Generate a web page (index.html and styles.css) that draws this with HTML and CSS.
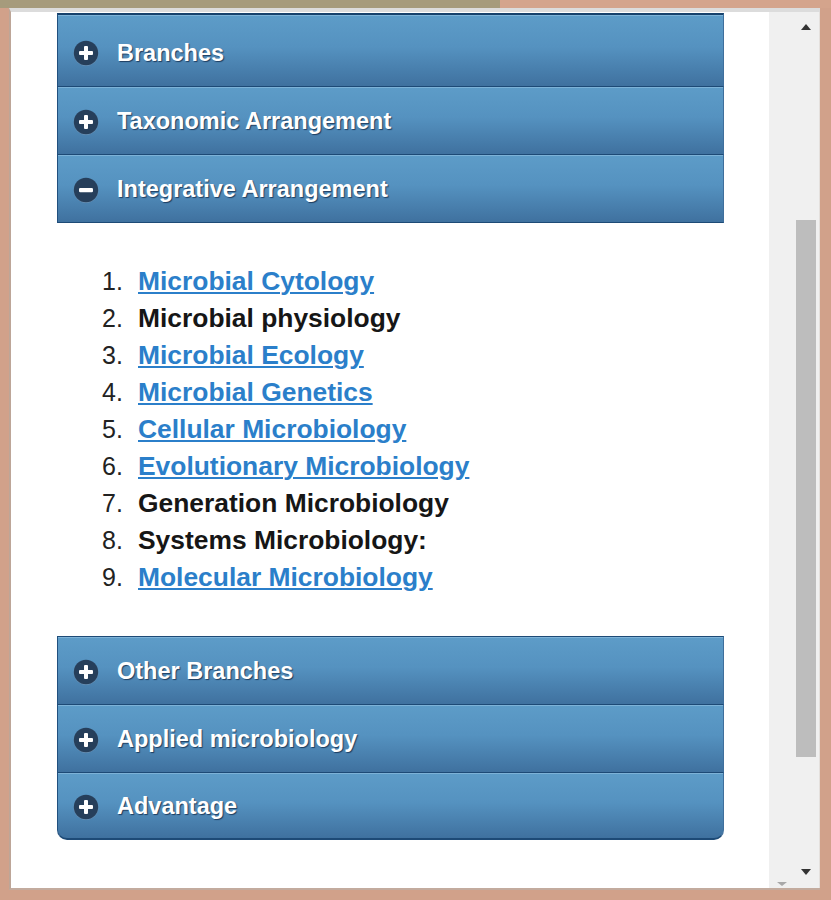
FILE: index.html
```html
<!DOCTYPE html>
<html lang="en">
<head>
<meta charset="utf-8">
<title>Microbiology</title>
<link rel="stylesheet" href="styles.css">
</head>
<body>
<div class="chrome-top"></div>
<div class="window">
  <div class="content">
    <div class="accordion">
      <div class="acc-head first">
        <svg class="acc-icon" viewBox="0 0 26 26" width="26" height="26"><circle cx="13" cy="13.6" r="12.4" fill="#6a91b4"/><circle cx="13" cy="13" r="12.2" fill="#263f5b"/><rect x="6" y="11" width="14" height="4" rx="1" fill="#fff"/><rect x="11" y="6" width="4" height="14" rx="1" fill="#fff"/></svg>
        <span class="acc-title">Branches</span>
      </div>
      <div class="acc-head">
        <svg class="acc-icon" viewBox="0 0 26 26" width="26" height="26"><circle cx="13" cy="13.6" r="12.4" fill="#6a91b4"/><circle cx="13" cy="13" r="12.2" fill="#263f5b"/><rect x="6" y="11" width="14" height="4" rx="1" fill="#fff"/><rect x="11" y="6" width="4" height="14" rx="1" fill="#fff"/></svg>
        <span class="acc-title">Taxonomic Arrangement</span>
      </div>
      <div class="acc-head open">
        <svg class="acc-icon" viewBox="0 0 26 26" width="26" height="26"><circle cx="13" cy="13.6" r="12.4" fill="#6a91b4"/><circle cx="13" cy="13" r="12.2" fill="#263f5b"/><rect x="6" y="11" width="14" height="4.2" rx="1.2" fill="#fff"/></svg>
        <span class="acc-title">Integrative Arrangement</span>
      </div>
      <div class="acc-panel">
        <ol class="branch-list">
          <li><a href="#">Microbial Cytology</a></li>
          <li><span>Microbial physiology</span></li>
          <li><a href="#">Microbial Ecology</a></li>
          <li><a href="#">Microbial Genetics</a></li>
          <li><a href="#">Cellular Microbiology</a></li>
          <li><a href="#">Evolutionary Microbiology</a></li>
          <li><span>Generation Microbiology</span></li>
          <li><span>Systems Microbiology:</span></li>
          <li><a href="#">Molecular Microbiology</a></li>
        </ol>
      </div>
      <div class="acc-head">
        <svg class="acc-icon" viewBox="0 0 26 26" width="26" height="26"><circle cx="13" cy="13.6" r="12.4" fill="#6a91b4"/><circle cx="13" cy="13" r="12.2" fill="#263f5b"/><rect x="6" y="11" width="14" height="4" rx="1" fill="#fff"/><rect x="11" y="6" width="4" height="14" rx="1" fill="#fff"/></svg>
        <span class="acc-title">Other Branches</span>
      </div>
      <div class="acc-head">
        <svg class="acc-icon" viewBox="0 0 26 26" width="26" height="26"><circle cx="13" cy="13.6" r="12.4" fill="#6a91b4"/><circle cx="13" cy="13" r="12.2" fill="#263f5b"/><rect x="6" y="11" width="14" height="4" rx="1" fill="#fff"/><rect x="11" y="6" width="4" height="14" rx="1" fill="#fff"/></svg>
        <span class="acc-title">Applied microbiology</span>
      </div>
      <div class="acc-head last">
        <svg class="acc-icon" viewBox="0 0 26 26" width="26" height="26"><circle cx="13" cy="13.6" r="12.4" fill="#6a91b4"/><circle cx="13" cy="13" r="12.2" fill="#263f5b"/><rect x="6" y="11" width="14" height="4" rx="1" fill="#fff"/><rect x="11" y="6" width="4" height="14" rx="1" fill="#fff"/></svg>
        <span class="acc-title">Advantage</span>
      </div>
    </div>
  </div>
  <div class="scrollbar">
    <div class="sb-column">
      <span class="arrow-up"></span>
      <div class="thumb"></div>
      <span class="arrow-down"></span>
    </div>
    <span class="ghost-arrow"></span>
  </div>
</div>
</body>
</html>
```
FILE: styles.css
```css
html, body {
  margin: 0;
  padding: 0;
}
body {
  width: 831px;
  height: 900px;
  background: #d1a18a;
  display: flex;
  flex-direction: column;
  overflow: hidden;
  font-family: "Liberation Sans", Arial, sans-serif;
}
.chrome-top {
  height: 8px;
  flex: none;
  background: linear-gradient(to right, #a69b7c 0, #a69b7c 500px, #d4a48c 500px, #d4a48c 100%);
}
.window {
  flex: 1;
  margin: 0 11px 10px 9px;
  border-left: 2px solid #bda698;
  border-bottom: 2px solid #c3ab9e;
  border-top: 4px solid #dcdcdc;
  background: #fff;
  display: flex;
  min-height: 0;
}
.content {
  flex: 1;
  overflow: hidden;
  padding: 1px 0 0 46px;
}
.accordion {
  width: 667px;
}
.acc-head {
  height: 68px;
  box-sizing: border-box;
  border-top: 1px solid #1d4a76;
  border-left: 1px solid #21507e;
  border-right: 1px solid #3f6f9c;
  box-shadow: inset 0 1px 0 #7db2d7;
  background: linear-gradient(to bottom, #5d9cc8 0%, #5592c0 45%, #3f719f 100%);
  display: flex;
  align-items: center;
  padding: 2px 0 0 15px;
  gap: 18px;
}
.acc-head.first {
  height: 73px;
  border-top: 2px solid #16416c;
  padding-top: 5px;
}
.acc-head.open {
  border-bottom: 1px solid #1d4a76;
  height: 69px;
}
.acc-head.last {
  height: 68px;
  border-bottom: 2px solid #1d4a76;
  border-radius: 0 0 10px 10px;
}
.acc-icon {
  flex: none;
  display: block;
}
.acc-title {
  color: #fff;
  font-weight: bold;
  font-size: 23.5px;
  text-shadow: 1px 1px 1px rgba(10, 30, 60, 0.7);
  white-space: nowrap;
}
.acc-panel {
  background: #fff;
  padding: 40px 0 40px 0;
}
.branch-list {
  margin: 0;
  padding: 0 0 0 45px;
  list-style: none;
  counter-reset: item;
  font-size: 26.4px;
  line-height: 37px;
  color: #161616;
}
.branch-list li {
  font-weight: bold;
  counter-increment: item;
}
.branch-list li::before {
  content: counter(item) ".";
  display: inline-block;
  width: 36px;
  font-weight: normal;
  font-size: 25px;
  color: #222;
}
.branch-list a {
  color: #2b7fca;
  text-decoration: underline;
  text-decoration-thickness: 2px;
  text-underline-offset: 2px;
}
.scrollbar {
  width: 51px;
  flex: none;
  background: #f0f0f0;
  border-right: 1px solid #e4e0dd;
  box-sizing: border-box;
  display: flex;
  justify-content: flex-end;
  padding-right: 3px;
  position: relative;
}
.sb-column {
  width: 20px;
  display: flex;
  flex-direction: column;
  align-items: center;
}
.arrow-up {
  margin-top: 12px;
  width: 0;
  height: 0;
  border-left: 5px solid transparent;
  border-right: 5px solid transparent;
  border-bottom: 6px solid #333;
}
.thumb {
  margin-top: 190px;
  width: 20px;
  height: 537px;
  background: #bdbdbd;
}
.arrow-down {
  margin-top: 112px;
  width: 0;
  height: 0;
  border-left: 5px solid transparent;
  border-right: 5px solid transparent;
  border-top: 6px solid #333;
}
.ghost-arrow {
  position: absolute;
  left: 8px;
  bottom: 2px;
  width: 0;
  height: 0;
  border-left: 5px solid transparent;
  border-right: 5px solid transparent;
  border-top: 4px solid #a8a8a8;
}
```
